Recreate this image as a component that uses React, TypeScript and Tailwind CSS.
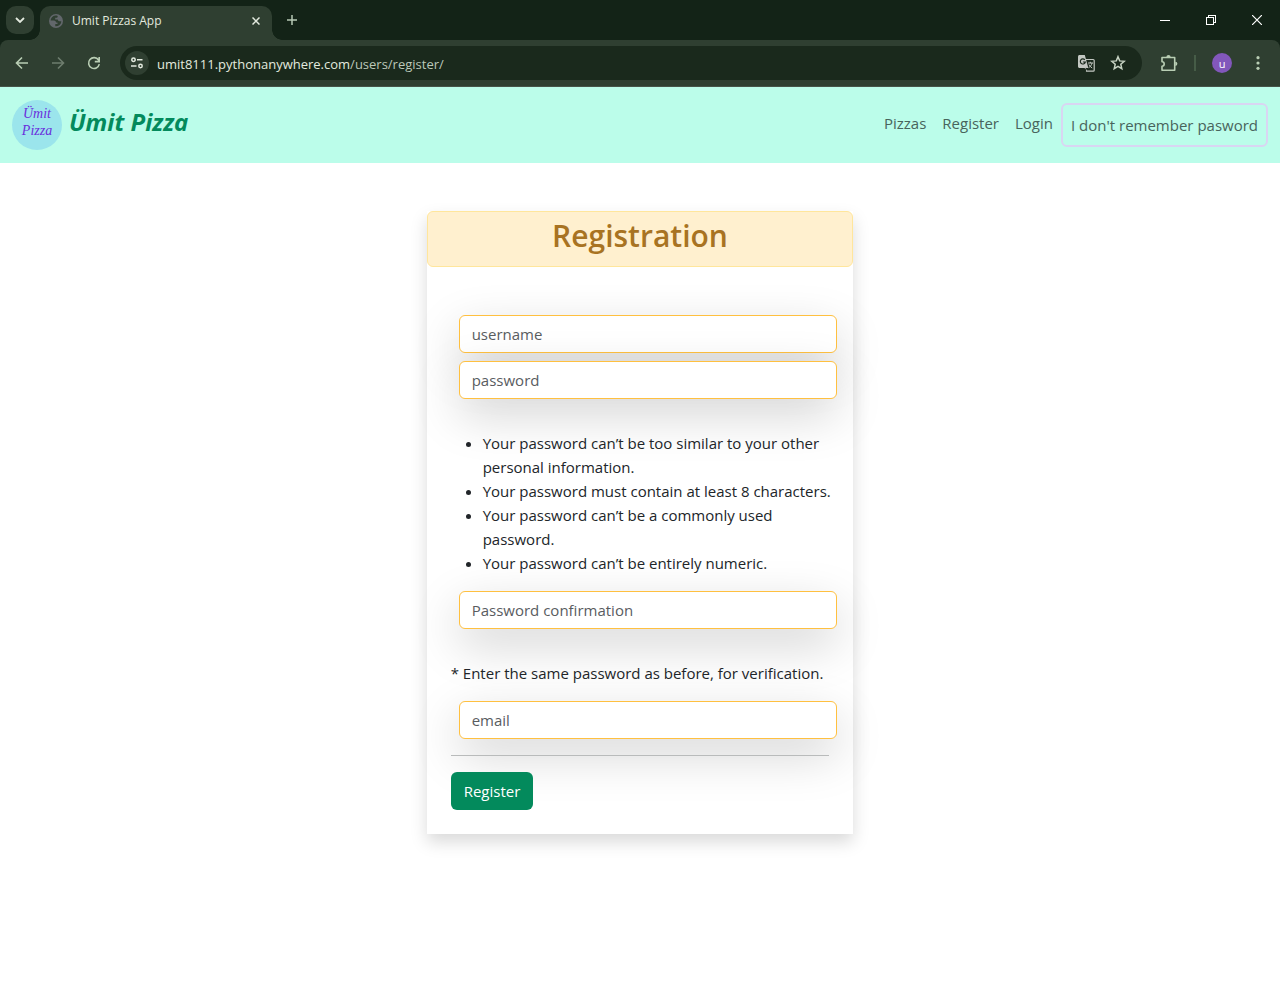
import React from "react";

const ui = "font-['Open_Sans','Noto_Sans',sans-serif]";

function Field({ id, type, placeholder }: { id: string; type: string; placeholder: string }) {
  return (
    <div className="ml-2 -mr-2">
      <input
        id={id}
        name={id}
        type={type}
        aria-label={placeholder}
        placeholder={placeholder}
        className="block h-[38px] w-full rounded-md border border-[#ffc040] bg-white px-3 text-[15px] text-[#212529] shadow-[0_16px_48px_rgba(0,0,0,0.175)] outline-none placeholder:text-[#595c5f] placeholder:opacity-100"
      />
    </div>
  );
}

function TabStrip() {
  return (
    <div className="flex h-10 items-end bg-[#132317]">
      <button aria-label="Search tabs" className="mb-[6px] ml-[6px] flex size-7 items-center justify-center rounded-[10px] bg-[#2f3f31]">
        <svg width="10" height="6" viewBox="0 0 10 6" fill="none" stroke="#e3eadf" strokeWidth="1.8">
          <path d="M1 1l4 4 4-4" />
        </svg>
      </button>
      <div className="relative ml-[6px] flex h-[34px] w-[232px] items-center rounded-t-[10px] bg-[#2f3f31] pr-[10px] pb-[5px] pl-[9px]">
        <span className="absolute bottom-0 -left-[10px] size-[10px] bg-[radial-gradient(circle_at_0_0,transparent_9.5px,#2f3f31_10px)]" />
        <span className="absolute -right-[10px] bottom-0 size-[10px] bg-[radial-gradient(circle_at_100%_0,transparent_9.5px,#2f3f31_10px)]" />
        <svg width="14" height="14" viewBox="0 0 14 14" className="shrink-0">
          <circle cx="7" cy="7" r="7" fill="#62676b" />
          <path d="M6.3 1.6C3.6 2 1.7 4.200 1.600 6.500h3.200c1.700 0 2.200 1 2.200 2h1.500v1.600H6.300v2.200c2.900.4 5.700-1.600 6.100-4.700-.6-.5-1.200-.4-1.900-.4-1 0-1.700-.8-1.700-1.700H6.200V3.700h1.500c.8 0 1-.8 1-1.700-.8-.4-1.600-.5-2.400-.4z" fill="#2f3f31" />
        </svg>
        <span className="ml-[9px] flex-1 text-[12px] leading-4 whitespace-nowrap text-[#e3eadf]">Umit Pizzas App</span>
        <button aria-label="Close tab" className="flex size-3 items-center justify-center">
          <svg width="8" height="8" viewBox="0 0 8 8" stroke="#e3eadf" strokeWidth="1.5">
            <path d="M.5.5l7 7M7.500.5l-7 7" />
          </svg>
        </button>
      </div>
      <button aria-label="New tab" className="mb-[13px] ml-[13px] flex size-[14px] items-center justify-center">
        <svg width="10" height="10" viewBox="0 0 10 10" stroke="#b7c9b5" strokeWidth="1.5">
          <path d="M5 0v10M0 5h10" />
        </svg>
      </button>
      <div className="ml-auto flex h-10">
        <button aria-label="Minimize" className="flex w-[46px] items-center justify-center">
          <svg width="10" height="10" viewBox="0 0 10 10" stroke="#fff" shapeRendering="crispEdges"><path d="M0 5h10" /></svg>
        </button>
        <button aria-label="Restore" className="flex w-[46px] items-center justify-center">
          <svg width="10" height="10" viewBox="0 0 10 10" fill="none" stroke="#fff" shapeRendering="crispEdges">
            <path d="M.5 2.500h7v7h-7zM2.500 2.500v-2h7v7h-2" />
          </svg>
        </button>
        <button aria-label="Close" className="flex w-[46px] items-center justify-center">
          <svg width="10" height="10" viewBox="0 0 10 10" stroke="#fff" strokeWidth="1.2"><path d="M0 0l10 10M10 0L0 10" /></svg>
        </button>
      </div>
    </div>
  );
}

function Toolbar() {
  return (
    <div className="bg-[#132317]">
      <div className="flex h-[47px] items-center rounded-t-lg border-b border-[#465348] bg-[#2f3f31] px-3">
        <button aria-label="Back" className="flex size-5 items-center justify-center">
          <svg width="14" height="14" viewBox="0 0 14 14" fill="none" stroke="#b9ceb4" strokeWidth="1.600">
            <path d="M13 7H2M7 1.500L1.500 7 7 12.500" />
          </svg>
        </button>
        <button aria-label="Forward" className="ml-4 flex size-5 items-center justify-center">
          <svg width="14" height="14" viewBox="0 0 14 14" fill="none" stroke="#6e7d6e" strokeWidth="1.600">
            <path d="M1 7h11M7 1.500L12.500 7 7 12.500" />
          </svg>
        </button>
        <button aria-label="Reload" className="ml-4 flex size-5 items-center justify-center">
          <svg width="14" height="14" viewBox="0 0 14 14" fill="none" stroke="#b9ceb4" strokeWidth="1.600">
            <path d="M12.300 8.200A5.400 5.400 0 1 1 11.500 4L12.500 5.300M12.200 1v4.600H7.800" />
          </svg>
        </button>
        <div className="ml-4 flex h-[34px] flex-1 items-center rounded-full bg-[#1a291c] pr-[15px] pl-[5px]">
          <button aria-label="Site information" className="flex size-6 items-center justify-center rounded-full bg-[#2f3f31]">
            <svg width="14" height="14" viewBox="0 0 14 14" fill="none" stroke="#e3eadf" strokeWidth="1.500">
              <circle cx="3.500" cy="3.700" r="1.700" />
              <path d="M7 3.700h5.500M1 10h5.500" />
              <circle cx="10.500" cy="10" r="1.700" />
            </svg>
          </button>
          <div className="ml-2 flex-1 pt-px text-[13px] leading-5 whitespace-nowrap text-[#bcc8b9]">
            <span className="text-[#e3eadf]">umit8111.pythonanywhere.com</span>/users/register/
          </div>
          <button aria-label="Translate this page" className="flex size-[18px] items-center justify-center">
            <svg width="17" height="17" viewBox="0 0 17 17" fill="none">
              <path d="M7 4.500h8.200c.6 0 1 .4 1 1v9.700c0 .6-.4 1-1 1H8.500L7 12" stroke="#c3c8c2" strokeWidth="1.200" />
              <path d="M1.500 0h5.300l3.500 13H1.500C.7 13 0 12.300 0 11.500v-10C0 .7.7 0 1.500 0z" fill="#c3c8c2" />
              <path d="M6.800 4.900A2.500 2.500 0 1 0 7.300 7H4.900M8.500 13L7 16" stroke="#1a291c" strokeWidth="1.200" />
              <path d="M10 8h5M12.300 6.800V8M14 8c-.4 2.200-1.800 3.700-3.300 4.700M11 9.500c.7 1.500 1.800 2.700 3.200 3.500" stroke="#c3c8c2" />
            </svg>
          </button>
          <button aria-label="Bookmark this tab" className="ml-[14px] flex size-[18px] items-center justify-center">
            <svg width="16" height="16" viewBox="0 0 16 16" fill="none" stroke="#c7d3c3" strokeWidth="1.500">
              <path d="M8 1.700l1.700 4.200 4.500.4-3.400 3 1 4.400L8 11.400l-3.800 2.300 1-4.400-3.400-3 4.500-.4z" />
            </svg>
          </button>
        </div>
        <button aria-label="Extensions" className="ml-[18px] flex size-[18px] items-center justify-center">
          <svg width="18" height="18" viewBox="0 0 18 18" fill="none" stroke="#b9ceb4" strokeWidth="1.600">
            <path d="M2 3.500h12.700v12.700H2v-4a2.100 2.100 0 0 0 0-4.400z" strokeLinejoin="round" />
            <path d="M6.400 3a2.100 2.100 0 0 1 4.200 0zM15.300 7.700a2.100 2.100 0 0 1 0 4.200z" fill="#b9ceb4" stroke="none" />
          </svg>
        </button>
        <span className="ml-4 h-4 w-[2px] bg-[#465c47]" />
        <button aria-label="Profile" className="ml-4 flex size-5 items-center justify-center rounded-full bg-[#8257bb] text-[11px] leading-none text-white">u</button>
        <button aria-label="Browser menu" className="ml-4 flex size-5 items-center justify-center">
          <svg width="4" height="14" viewBox="0 0 4 14" fill="#b9ceb4">
            <circle cx="2" cy="1.700" r="1.600" /><circle cx="2" cy="7" r="1.600" /><circle cx="2" cy="12.300" r="1.600" />
          </svg>
        </button>
      </div>
    </div>
  );
}

function SiteNav() {
  return (
    <nav className="flex h-[76px] items-center justify-between bg-[#bbfdea] px-3">
      <a href="#home" className="flex items-center gap-[7px]">
        <span className="flex size-[50px] flex-col items-center rounded-full bg-[#9be5ec] pt-[5px] font-['Liberation_Serif',serif] text-[14px] leading-[17px] text-[#6a2fdc] italic">
          <span>Ümit</span>
          <span>Pizza</span>
        </span>
        <span className="pb-[6px] text-[24px] leading-8 font-bold text-[#038a5c] italic">Ümit Pizza</span>
      </a>
      <div className="flex items-start text-[15px] leading-6 text-[#48645c]">
        <a href="#pizzas" className="p-2">Pizzas</a>
        <a href="#register" className="p-2">Register</a>
        <a href="#login" className="p-2">Login</a>
        <a href="#reset" className="rounded-md border-2 border-[#d9d5f2] p-2">I don't remember pasword</a>
      </div>
    </nav>
  );
}

export default function App() {
  return (
    <div className={`min-h-screen bg-white ${ui}`}>
      <header>
        <TabStrip />
        <Toolbar />
      </header>
      <SiteNav />
      <main className="py-12">
        <section className="mx-auto w-1/3 min-w-80 bg-white text-[15px] leading-6 text-[#212529] shadow-[0_8px_16px_rgba(0,0,0,0.15)]">
          <h1 className="h-14 rounded-md border border-[#ffe69c] bg-[#fff0cf] pt-[5px] text-center text-[30px] leading-[38px] font-semibold text-[#a87322]">
            Registration
          </h1>
          <form className="px-6 pt-12 pb-6" onSubmit={(e) => e.preventDefault()}>
            <div className="space-y-2">
              <Field id="username" type="text" placeholder="username" />
              <Field id="password1" type="password" placeholder="password" />
            </div>
            <ul className="mt-8 -mr-2 mb-4 list-disc pl-8">
              <li>Your password can’t be too similar to your other personal information.</li>
              <li>Your password must contain at least 8 characters.</li>
              <li>Your password can’t be a commonly used password.</li>
              <li>Your password can’t be entirely numeric.</li>
            </ul>
            <Field id="password2" type="password" placeholder="Password confirmation" />
            <p className="mt-8 mb-4">* Enter the same password as before, for verification.</p>
            <Field id="email" type="email" placeholder="email" />
            <hr className="my-4 border-[#b9bbbb]" />
            <button type="submit" className="h-[38px] rounded-md bg-[#038a5c] px-[13px] text-white">Register</button>
          </form>
        </section>
      </main>
    </div>
  );
}
